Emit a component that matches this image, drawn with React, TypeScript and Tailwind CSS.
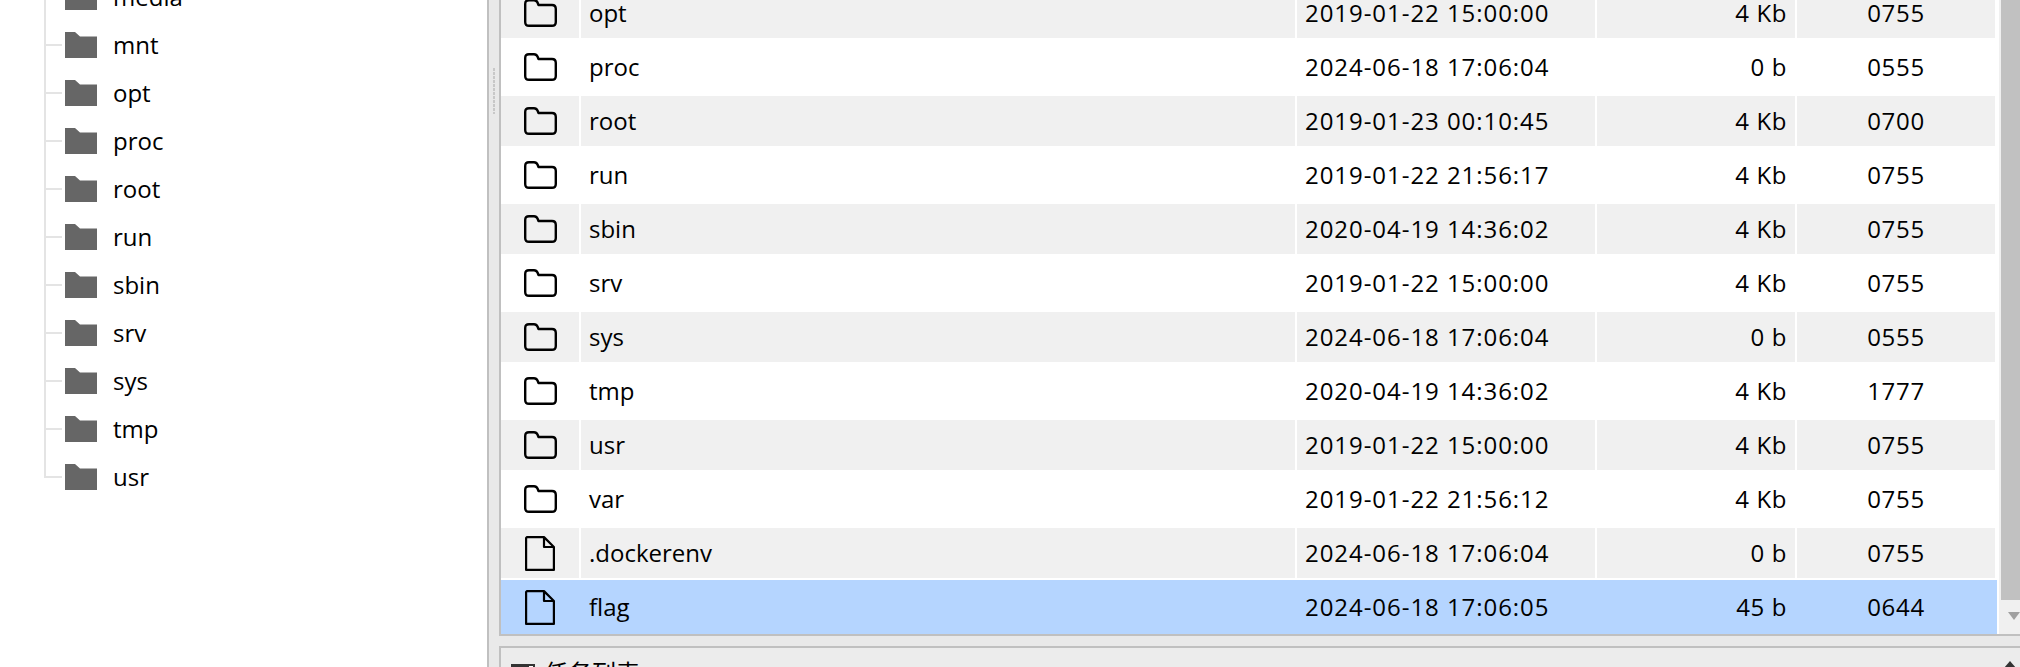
/**
 * FilesPage
 * Directory tree on the left, file table on the right
 */

import React from 'react';

const treeItems = ['media', 'mnt', 'opt', 'proc', 'root', 'run', 'sbin', 'srv', 'sys', 'tmp', 'usr'];

type FileRow = {
  name: string;
  date: string;
  size: string;
  mode: string;
  isFile?: boolean;
  selected?: boolean;
};

const fileRows: FileRow[] = [
  { name: 'opt', date: '2019-01-22 15:00:00', size: '4 Kb', mode: '0755' },
  { name: 'proc', date: '2024-06-18 17:06:04', size: '0 b', mode: '0555' },
  { name: 'root', date: '2019-01-23 00:10:45', size: '4 Kb', mode: '0700' },
  { name: 'run', date: '2019-01-22 21:56:17', size: '4 Kb', mode: '0755' },
  { name: 'sbin', date: '2020-04-19 14:36:02', size: '4 Kb', mode: '0755' },
  { name: 'srv', date: '2019-01-22 15:00:00', size: '4 Kb', mode: '0755' },
  { name: 'sys', date: '2024-06-18 17:06:04', size: '0 b', mode: '0555' },
  { name: 'tmp', date: '2020-04-19 14:36:02', size: '4 Kb', mode: '1777' },
  { name: 'usr', date: '2019-01-22 15:00:00', size: '4 Kb', mode: '0755' },
  { name: 'var', date: '2019-01-22 21:56:12', size: '4 Kb', mode: '0755' },
  { name: '.dockerenv', date: '2024-06-18 17:06:04', size: '0 b', mode: '0755', isFile: true },
  { name: 'flag', date: '2024-06-18 17:06:05', size: '45 b', mode: '0644', isFile: true, selected: true },
];

const FolderSolid = () => (
  <svg width="32" height="26" viewBox="0 0 32 26" className="shrink-0">
    <path d="M0 0H10L15 4.5H32V26H0Z" fill="#666666" />
  </svg>
);

const FolderOutline = () => (
  <svg width="33" height="28" viewBox="0 0 33 28" fill="none" stroke="#000000" strokeWidth="2.4">
    <path d="M1.2 5Q1.2 1.2 5 1.2H10Q12.5 1.2 13.5 3.5L14.5 6H28Q31.8 6 31.8 10V23Q31.8 26.8 28 26.8H5Q1.2 26.8 1.2 23Z" strokeLinejoin="round" />
  </svg>
);

const FileOutline = () => (
  <svg width="30" height="35" viewBox="0 0 30 35" fill="none" stroke="#000000" strokeWidth="2.2">
    <path d="M2 1.1H19L28.9 11V33.9H1.1V2Z M19 1.1V11H28.9" strokeLinejoin="round" />
  </svg>
);

const TreeRow: React.FC<{ name: string; last: boolean }> = ({ name, last }) => (
  <div className="flex h-12 items-center">
    {/* Tree guide lines */}
    <div className="flex h-full w-[18px] flex-col">
      <div className="h-1/2 w-full border-l-2 border-[#e4e4e4]" />
      <div className="-mt-px w-full border-t-2 border-[#e4e4e4]" />
      {!last && <div className="flex-1 border-l-2 border-[#e4e4e4]" />}
    </div>
    <div className="ml-[3px]">
      <FolderSolid />
    </div>
    <span className="ml-4 text-black">{name}</span>
  </div>
);

const TableRow: React.FC<{ row: FileRow; shaded: boolean }> = ({ row, shaded }) => {
  const cellBg = row.selected ? '' : shaded ? 'bg-[#f0f0f0]' : '';
  return (
    <div className={`flex h-[54px] py-[2px] pr-[2px] ${row.selected ? 'bg-[#b5d5ff]' : ''}`}>
      <div className={`flex w-[78px] shrink-0 items-center justify-center ${cellBg}`}>
        {row.isFile ? <FileOutline /> : <FolderOutline />}
      </div>
      <div className={`ml-[2px] flex w-[714px] shrink-0 items-center pl-2 ${cellBg}`}>{row.name}</div>
      <div className={`ml-[2px] flex w-[298px] shrink-0 items-center pl-2 tracking-[0.95px] ${cellBg}`}>{row.date}</div>
      <div className={`ml-[2px] flex w-[198px] shrink-0 items-center justify-end pr-2 tracking-[0.6px] ${cellBg}`}>{row.size}</div>
      <div className={`ml-[2px] flex w-[198px] shrink-0 items-center justify-center tracking-[0.7px] ${cellBg}`}>{row.mode}</div>
    </div>
  );
};

export default function App() {
  return (
    <div className="flex h-[667px] w-[2020px] overflow-hidden bg-[#e9e9e9] font-['Open_Sans','Noto_Sans_CJK_SC',sans-serif] text-[24px] text-black">
      {/* Directory tree */}
      <div className="h-full w-[489px] shrink-0 border-r-2 border-[#c0c0c0] bg-white pl-11">
        <div className="-mt-[27px]">
          {treeItems.map((item, i) => (
            <TreeRow key={item} name={item} last={i === treeItems.length - 1} />
          ))}
        </div>
      </div>

      {/* Splitter */}
      <div className="flex h-full w-[10px] shrink-0 items-start justify-center pt-[68px]">
        <div className="h-[46px] w-[2px] bg-[repeating-linear-gradient(to_bottom,#c8c8c8_0,#c8c8c8_3px,transparent_3px,transparent_4px)]" />
      </div>

      {/* Right side */}
      <div className="flex h-full min-w-0 flex-1 flex-col">
        <div className="flex h-[636px] shrink-0 overflow-hidden border-b-2 border-l-2 border-[#c0c0c0] bg-white">
          <div className="w-[1496px] shrink-0 -mt-[14px]">
            {fileRows.map((row, i) => (
              <TableRow key={row.name} row={row} shaded={i % 2 === 0} />
            ))}
          </div>
          {/* Scrollbar */}
          <div className="ml-[2px] flex min-w-0 flex-1 flex-col bg-[#f0f0f0] pl-[2px]">
            <div className="h-[600px] shrink-0 bg-[#c1c1c1]" />
            <div className="flex flex-1 items-start justify-end pt-[12px]">
              <div className="h-0 w-0 border-x-[6px] border-t-[8px] border-x-transparent border-t-[#a0a0a0]" />
            </div>
          </div>
        </div>

        {/* Bottom panel */}
        <div className="mt-[10px] flex flex-1 items-start border-l-2 border-t-2 border-[#c0c0c0] bg-[#ececec] pl-[10px] pt-[10px]">
          <svg width="24" height="18" viewBox="0 0 24 18" className="mt-[6px] shrink-0">
            <rect x="1" y="1" width="22" height="16" fill="#ffffff" stroke="#333333" strokeWidth="2" />
            <rect x="0" y="0" width="18" height="5" fill="#333333" />
          </svg>
          <span className="ml-[9px] leading-[30px]">任务列表</span>
          <div className="ml-auto mr-[4px] mt-[3px] h-0 w-0 border-x-[6px] border-b-[7px] border-x-transparent border-b-[#333333]" />
        </div>
      </div>
    </div>
  );
}
